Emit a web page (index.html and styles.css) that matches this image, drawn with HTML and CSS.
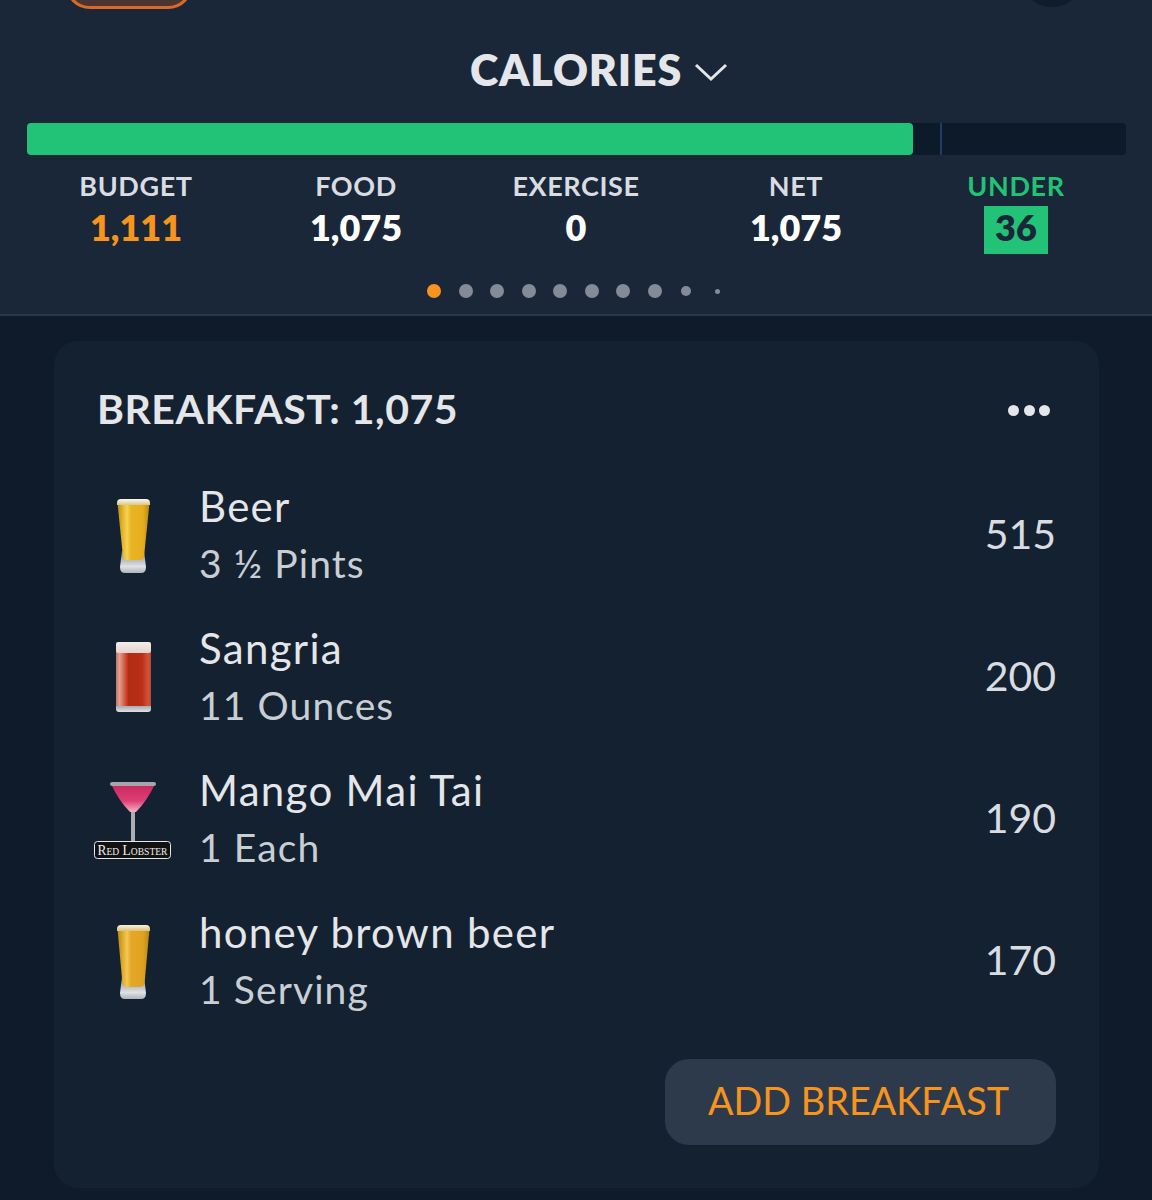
FILE: index.html
```html
<!DOCTYPE html>
<html lang="en">
<head>
    <meta charset="UTF-8">
    <meta name="viewport" content="width=device-width, initial-scale=1.0">
    <title>Calories</title>
    <link rel="stylesheet" href="styles.css">
</head>
<body>
    <header class="summary">
        <div class="top-row">
            <div class="pill"></div>
            <div class="round"></div>
        </div>
        <h1 class="summary-title">
            CALORIES
            <svg class="chevron" width="34" height="20" viewBox="0 0 34 20"><path d="M2 3 L17 17 L32 3" fill="none" stroke="#e4e6e9" stroke-width="3"/></svg>
        </h1>
        <div class="bar">
            <div class="bar-fill"></div>
            <div class="bar-tick"></div>
        </div>
        <div class="stats">
            <div class="stat">
                <div class="stat-label">BUDGET</div>
                <div class="stat-value orange">1,111</div>
            </div>
            <div class="stat">
                <div class="stat-label">FOOD</div>
                <div class="stat-value">1,075</div>
            </div>
            <div class="stat">
                <div class="stat-label">EXERCISE</div>
                <div class="stat-value">0</div>
            </div>
            <div class="stat">
                <div class="stat-label">NET</div>
                <div class="stat-value">1,075</div>
            </div>
            <div class="stat">
                <div class="stat-label green">UNDER</div>
                <div class="stat-value badge">36</div>
            </div>
        </div>
        <div class="dots">
            <span class="dot active"></span>
            <span class="dot"></span>
            <span class="dot"></span>
            <span class="dot"></span>
            <span class="dot"></span>
            <span class="dot"></span>
            <span class="dot"></span>
            <span class="dot"></span>
            <span class="dot small"></span>
            <span class="dot tiny"></span>
        </div>
    </header>

    <main class="card">
        <div class="card-head">
            <h2 class="card-title">BREAKFAST: 1,075</h2>
            <div class="more"><span></span><span></span><span></span></div>
        </div>

        <div class="row">
            <div class="row-icon">
                <svg width="40" height="80" viewBox="0 0 40 80">
                    <defs>
                        <linearGradient id="beerA" x1="0" x2="1" y1="0" y2="0">
                            <stop offset="0" stop-color="#b98a14"/>
                            <stop offset="0.18" stop-color="#e8b92c"/>
                            <stop offset="0.3" stop-color="#f6d257"/>
                            <stop offset="0.42" stop-color="#e9b522"/>
                            <stop offset="0.8" stop-color="#e6ae1d"/>
                            <stop offset="1" stop-color="#b9860f"/>
                        </linearGradient>
                        <linearGradient id="baseA" x1="0" x2="0" y1="0" y2="1">
                            <stop offset="0" stop-color="#7f878e"/>
                            <stop offset="0.7" stop-color="#dfe2e5"/>
                            <stop offset="1" stop-color="#aeb4b9"/>
                        </linearGradient>
                        <linearGradient id="foamA" x1="0" x2="0" y1="0" y2="1">
                            <stop offset="0" stop-color="#fbf8ee"/>
                            <stop offset="1" stop-color="#d8c88e"/>
                        </linearGradient>
                    </defs>
                    <path d="M9 56 L31 56 L33 72 Q33 78 28 78 L12 78 Q7 78 7 72 Z" fill="url(#baseA)"/>
                    <path d="M4.5 8 L36.5 8 L31 62 Q30 65 26 65 L14 65 Q11 65 10 62 Z" fill="url(#beerA)"/>
                    <path d="M4 8 Q4 4 8 4 L33 4 Q37 4 37 8 L37 10 L4 10 Z" fill="url(#foamA)"/>
                </svg>
            </div>
            <div class="row-text">
                <div class="food-name">Beer</div>
                <div class="food-amount">3 ½ Pints</div>
            </div>
            <div class="row-cals">515</div>
        </div>

        <div class="row">
            <div class="row-icon">
                <svg width="40" height="74" viewBox="0 0 40 74">
                    <defs>
                        <linearGradient id="sangria" x1="0" x2="1" y1="0" y2="0">
                            <stop offset="0" stop-color="#c9705f"/>
                            <stop offset="0.1" stop-color="#e0a093"/>
                            <stop offset="0.28" stop-color="#cf4a30"/>
                            <stop offset="0.36" stop-color="#b22c14"/>
                            <stop offset="0.75" stop-color="#b92f17"/>
                            <stop offset="0.92" stop-color="#d2553c"/>
                            <stop offset="1" stop-color="#b9442e"/>
                        </linearGradient>
                        <linearGradient id="baseB" x1="0" x2="0" y1="0" y2="1">
                            <stop offset="0" stop-color="#6f767c"/>
                            <stop offset="1" stop-color="#dfe2e4"/>
                        </linearGradient>
                        <linearGradient id="foamB" x1="0" x2="0" y1="0" y2="1">
                            <stop offset="0" stop-color="#f3eeeb"/>
                            <stop offset="1" stop-color="#e4d3cd"/>
                        </linearGradient>
                    </defs>
                    <rect x="3" y="60" width="35" height="12" rx="3" fill="url(#baseB)"/>
                    <rect x="3" y="8" width="35" height="58" fill="url(#sangria)"/>
                    <rect x="3" y="2" width="35" height="11" rx="2" fill="url(#foamB)"/>
                </svg>
            </div>
            <div class="row-text">
                <div class="food-name">Sangria</div>
                <div class="food-amount">11 Ounces</div>
            </div>
            <div class="row-cals">200</div>
        </div>

        <div class="row">
            <div class="row-icon">
                <svg width="80" height="80" viewBox="0 0 80 80">
                    <defs>
                        <linearGradient id="cocktail" x1="0" x2="0" y1="0" y2="1">
                            <stop offset="0" stop-color="#c7285c"/>
                            <stop offset="0.6" stop-color="#dd3f75"/>
                            <stop offset="1" stop-color="#f2b4c8"/>
                        </linearGradient>
                    </defs>
                    <rect x="38" y="32" width="4" height="31" fill="#a9afb5"/>
                    <path d="M18 5 L62 5 Q54 22 43 33 L37 33 Q26 22 18 5 Z" fill="url(#cocktail)"/>
                    <rect x="17" y="3" width="46" height="4" rx="2" fill="#a8a4ab"/>
                    <rect x="1.5" y="62.5" width="76" height="17" rx="3" fill="#111" stroke="#e8e8e8" stroke-width="1"/>
                    <text x="39.5" y="75.5" text-anchor="middle" textLength="70" lengthAdjust="spacingAndGlyphs" class="lobster">Red Lobster</text>
                </svg>
            </div>
            <div class="row-text">
                <div class="food-name">Mango Mai Tai</div>
                <div class="food-amount">1 Each</div>
            </div>
            <div class="row-cals">190</div>
        </div>

        <div class="row">
            <div class="row-icon">
                <svg width="40" height="80" viewBox="0 0 40 80">
                    <defs>
                        <linearGradient id="beerB" x1="0" x2="1" y1="0" y2="0">
                            <stop offset="0" stop-color="#b98818"/>
                            <stop offset="0.18" stop-color="#e4ae2c"/>
                            <stop offset="0.3" stop-color="#f2c85a"/>
                            <stop offset="0.42" stop-color="#e4a826"/>
                            <stop offset="0.8" stop-color="#e0a222"/>
                            <stop offset="1" stop-color="#b98414"/>
                        </linearGradient>
                        <linearGradient id="baseC" x1="0" x2="0" y1="0" y2="1">
                            <stop offset="0" stop-color="#7f878e"/>
                            <stop offset="0.7" stop-color="#dfe2e5"/>
                            <stop offset="1" stop-color="#aeb4b9"/>
                        </linearGradient>
                        <linearGradient id="foamC" x1="0" x2="0" y1="0" y2="1">
                            <stop offset="0" stop-color="#f8f2dc"/>
                            <stop offset="1" stop-color="#dcc07a"/>
                        </linearGradient>
                    </defs>
                    <path d="M9 56 L31 56 L33 72 Q33 78 28 78 L12 78 Q7 78 7 72 Z" fill="url(#baseC)"/>
                    <path d="M4.5 8 L36.5 8 L31.5 63 Q30.5 66 26 66 L14 66 Q10.5 66 9.5 63 Z" fill="url(#beerB)"/>
                    <path d="M4 8 Q4 4 8 4 L33 4 Q37 4 37 8 L37 10 L4 10 Z" fill="url(#foamC)"/>
                </svg>
            </div>
            <div class="row-text">
                <div class="food-name">honey brown beer</div>
                <div class="food-amount">1 Serving</div>
            </div>
            <div class="row-cals">170</div>
        </div>

        <div class="card-foot">
            <button class="add-btn" type="button">ADD BREAKFAST</button>
        </div>
    </main>
</body>
</html>
```

FILE: styles.css
```css
body {
    margin: 0;
    background: #0f1b2a;
    font-family: Lato, "Open Sans", sans-serif;
    color: #e4e6e9;
}

/* top summary panel */
.summary {
    height: 314px;
    background: #1a2738;
    border-bottom: 2px solid #2b3746;
    padding: 0 26px;
}
.top-row {
    height: 9px;
    overflow: hidden;
    display: flex;
    justify-content: space-between;
    align-items: flex-end;
    padding: 0 41px 0 39px;
}
.pill {
    width: 128px;
    height: 50px;
    flex-shrink: 0;
    box-sizing: border-box;
    background: #4a3533;
    border: 3px solid #d96b2a;
    border-radius: 25px;
}
.round {
    width: 66px;
    height: 66px;
    margin-bottom: 2px;
    flex-shrink: 0;
    background: #101c2b;
    border-radius: 50%;
}
.summary-title {
    margin: 33px 0 0;
    padding-left: 46px;
    height: 56px;
    display: flex;
    justify-content: center;
    align-items: center;
    gap: 12px;
    font-size: 43px;
    font-weight: 800;
    line-height: 56px;
    letter-spacing: 0.8px;
}
.chevron {
    margin-top: 3px;
}
.bar {
    position: relative;
    height: 32px;
    margin: 25px 0 0 1px;
    background: #0d1a2a;
    border-radius: 4px;
}
.bar-fill {
    width: 886px;
    height: 100%;
    background: #22c376;
    border-radius: 4px;
}
.bar-tick {
    position: absolute;
    left: 913px;
    top: 0;
    width: 2px;
    height: 100%;
    background: #1c3d66;
}
.stats {
    display: grid;
    grid-template-columns: repeat(5, 220px);
    margin-top: 15px;
    text-align: center;
}
.stat-label {
    font-size: 27px;
    font-weight: 700;
    line-height: 32px;
    letter-spacing: 0.6px;
    color: #d9dce0;
}
.stat-value {
    font-size: 36px;
    font-weight: 800;
    line-height: 42px;
    padding-bottom: 6px;
    margin-top: 4px;
    color: #fff;
}
.orange { color: #f7941e; }
.green { color: #22c376; }
.badge {
    width: 64px;
    margin: 4px auto 0;
    background: #22c376;
    color: #1a2738;
}
.dots {
    display: flex;
    justify-content: center;
    align-items: center;
    gap: 17.5px;
    height: 14px;
    margin-top: 30px;
}
.dot {
    width: 14px;
    height: 14px;
    border-radius: 50%;
    background: #848b96;
}
.dot.active { background: #f7941e; }
.dot.small { width: 10px; height: 10px; margin: 0 2px; }
.dot.tiny { width: 5px; height: 5px; margin: 0 4.5px; }

/* meal card */
.card {
    margin: 25px 53px 12px 54px;
    padding: 0 43px 43px 35px;
    background: #142130;
    border-radius: 24px;
}
.card-head {
    height: 123px;
    display: flex;
    justify-content: space-between;
    align-items: center;
    padding: 11px 6px 0 8px;
    box-sizing: border-box;
}
.card-title {
    margin: 0;
    font-size: 41px;
    font-weight: 700;
    letter-spacing: 0.5px;
}
.more {
    display: flex;
    gap: 4.5px;
    margin-top: 5px;
}
.more span {
    width: 11px;
    height: 11px;
    border-radius: 50%;
    background: #e4e6e9;
}
.row {
    height: 142px;
    display: flex;
    align-items: center;
}
.row-icon {
    width: 88px;
    flex-shrink: 0;
    display: flex;
    justify-content: center;
    margin-right: 22px;
}
.row-icon svg {
    display: block;
}
.lobster {
    font-family: "Liberation Serif", serif;
    font-size: 14px;
    font-variant: small-caps;
    fill: #eee;
}
.row-text {
    flex: 1;
    padding-bottom: 2px;
}
.food-name {
    font-size: 42px;
    line-height: 58px;
    letter-spacing: 1.3px;
}
.food-amount {
    font-size: 39px;
    line-height: 56px;
    letter-spacing: 1.1px;
    color: #c9ced4;
}
.row-cals {
    font-size: 41px;
    padding-bottom: 4px;
    color: #d9dce0;
}
.card-foot {
    display: flex;
    justify-content: flex-end;
    margin-top: 27px;
}
.add-btn {
    width: 391px;
    height: 86px;
    padding: 0 4px 4px 0;
    background: #2c3a4c;
    color: #f7941e;
    border: none;
    border-radius: 24px;
    font-family: inherit;
    font-size: 37.8px;
    cursor: pointer;
}
```
